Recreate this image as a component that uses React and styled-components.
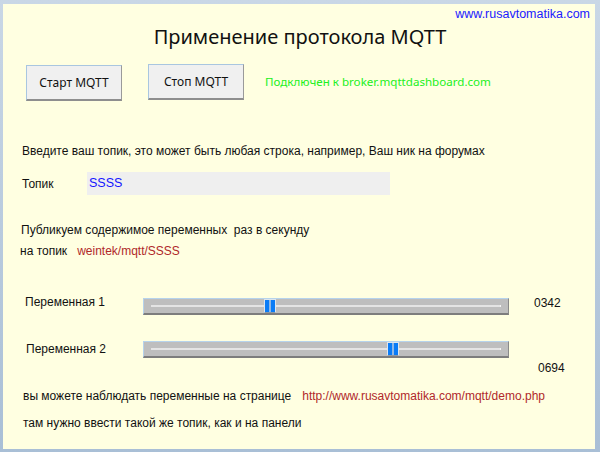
import React from 'react'
import styled, { createGlobalStyle } from 'styled-components'

const GlobalStyle = createGlobalStyle`
  html, body {
    margin: 0;
    padding: 0;
    background: #aec2d8;
  }
  body {
    font-family: 'Liberation Sans', Arial, sans-serif;
  }
`

const Frame = styled.div`
  width: 600px;
  height: 452px;
  box-sizing: border-box;
  padding: 4px 5px 3px 3px;
  background: linear-gradient(180deg, #c9d7e6 0%, #a9bfd6 100%);
`

const Panel = styled.div`
  height: 100%;
  box-sizing: border-box;
  background: #ffffe1;
  padding: 0 5px 0 17px;
  display: flex;
  flex-direction: column;
  color: #111;
  font-size: 12px;
`

const SiteLink = styled.div`
  align-self: flex-end;
  height: 16px;
  margin-top: 2px;
  line-height: 16px;
  font-size: 12.5px;
  color: #1a1aff;
`

const Title = styled.h1`
  margin: 3px 0 0;
  text-align: center;
  font-family: 'Noto Sans', sans-serif;
  font-weight: 400;
  font-size: 20px;
  line-height: 24px;
  padding-right: 10px;
`

const ButtonRow = styled.div`
  display: flex;
  align-items: center;
  margin-top: 16px;
  padding-left: 6px;
`

const Button = styled.button`
  width: 96px;
  height: 36px;
  margin-right: ${p => p.$gap}px;
  margin-top: ${p => p.$shift || 0}px;
  background: #f0f0f0;
  border: 1px solid #a9c6e0;
  border-right-color: #9a9a9a;
  border-bottom: 2px solid #8e8e8e;
  font-family: 'Noto Sans', sans-serif;
  font-size: 12px;
  color: #111;
  padding: 0;
`

const Status = styled.span`
  font-family: 'Noto Sans', sans-serif;
  font-size: 11.6px;
  color: #20f020;
  margin-top: -3px;
`

const Line = styled.div`
  height: 16px;
  line-height: 16px;
  margin-top: ${p => p.$top}px;
  padding-left: ${p => p.$indent || 0}px;
  white-space: pre;
`

const TopicRow = styled.div`
  display: flex;
  align-items: center;
  margin-top: 13px;
  height: 23px;
  padding-left: 2px;
`

const TopicLabel = styled.span`
  width: 65px;
`

const TopicField = styled.div`
  width: 303px;
  height: 23px;
  background: #efefef;
  color: #1616ff;
  font-size: 12.5px;
  line-height: 23px;
  padding-left: 2px;
  box-sizing: border-box;
`

const Red = styled.span`
  color: #b0282a;
  margin-left: ${p => p.$gap}px;
`

const VarRow = styled.div`
  display: flex;
  align-items: flex-start;
  margin-top: ${p => p.$top}px;
`

const VarLabel = styled.span`
  width: ${p => 123 - p.$indent}px;
  padding-left: ${p => p.$indent}px;
  line-height: 16px;
`

const Track = styled.div`
  position: relative;
  width: 366px;
  height: 17px;
  margin-top: ${p => p.$top}px;
  background: #bebebe;
  border-top: 1px solid #b6d3ec;
  border-left: 1px solid #b6d3ec;
  border-bottom: 2px solid #7d7d7d;
  border-right: 1px solid #8a8a8a;
  box-sizing: border-box;

  &::before {
    content: '';
    position: absolute;
    left: 7px;
    right: 7px;
    top: 6px;
    height: 2px;
    background: #e4e4e4;
    border-right: 1px solid #f4f4f4;
  }
`

const Thumb = styled.div`
  position: absolute;
  top: 0;
  width: 12px;
  height: 14px;
  margin-left: -6px;
  box-sizing: border-box;
  border: 1px solid #dde6ee;
  border-bottom-color: #8e9aa6;
  background: linear-gradient(90deg, #0a7cf6 0 4px, #8fb8e6 4px 6px, #0a7cf6 6px);
`

const Value = styled.span`
  margin-left: ${p => p.$gap}px;
  margin-top: ${p => p.$top}px;
  line-height: 16px;
`

const variables = [
  { id: 1, label: 'Переменная 1', value: 342, indent: 5, rowTop: 35, trackTop: 4, valueGap: 25, valueTop: 1 },
  { id: 2, label: 'Переменная 2', value: 694, indent: 6, rowTop: 26, trackTop: 0, valueGap: 29, valueTop: 19 },
]

const Slider = ({ value, top }) => (
  <Track $top={top}>
    <Thumb style={{ left: `${7 + (value / 1000) * 348}px` }} />
  </Track>
)

const App = () => {
  return (
    <>
      <GlobalStyle />
      <Frame>
        <Panel>
          <SiteLink>www.rusavtomatika.com</SiteLink>
          <Title>Применение протокола MQTT</Title>

          <ButtonRow>
            <Button $gap={26}>Старт MQTT</Button>
            <Button $gap={21} $shift={-2}>Стоп MQTT</Button>
            <Status>Подключен к broker.mqttdashboard.com</Status>
          </ButtonRow>

          <Line $top={42} $indent={2}>
            Введите ваш топик, это может быть любая строка, например, Ваш ник на форумах
          </Line>

          <TopicRow>
            <TopicLabel>Топик</TopicLabel>
            <TopicField>SSSS</TopicField>
          </TopicRow>

          <Line $top={27} $indent={1}>
            Публикуем содержимое переменных  раз в секунду
          </Line>
          <Line $top={5}>
            на топик<Red $gap={10}>weintek/mqtt/SSSS</Red>
          </Line>

          {variables.map(v => (
            <VarRow key={v.id} $top={v.rowTop}>
              <VarLabel $indent={v.indent}>{v.label}</VarLabel>
              <Slider value={v.value} top={v.trackTop} />
              <Value $gap={v.valueGap} $top={v.valueTop}>
                {String(v.value).padStart(4, '0')}
              </Value>
            </VarRow>
          ))}

          <Line $top={12} $indent={3}>
            вы можете наблюдать переменные на странице<Red $gap={11}>http://www.rusavtomatika.com/mqtt/demo.php</Red>
          </Line>
          <Line $top={11} $indent={3}>
            там нужно ввести такой же топик, как и на панели
          </Line>
        </Panel>
      </Frame>
    </>
  )
}

export default App
